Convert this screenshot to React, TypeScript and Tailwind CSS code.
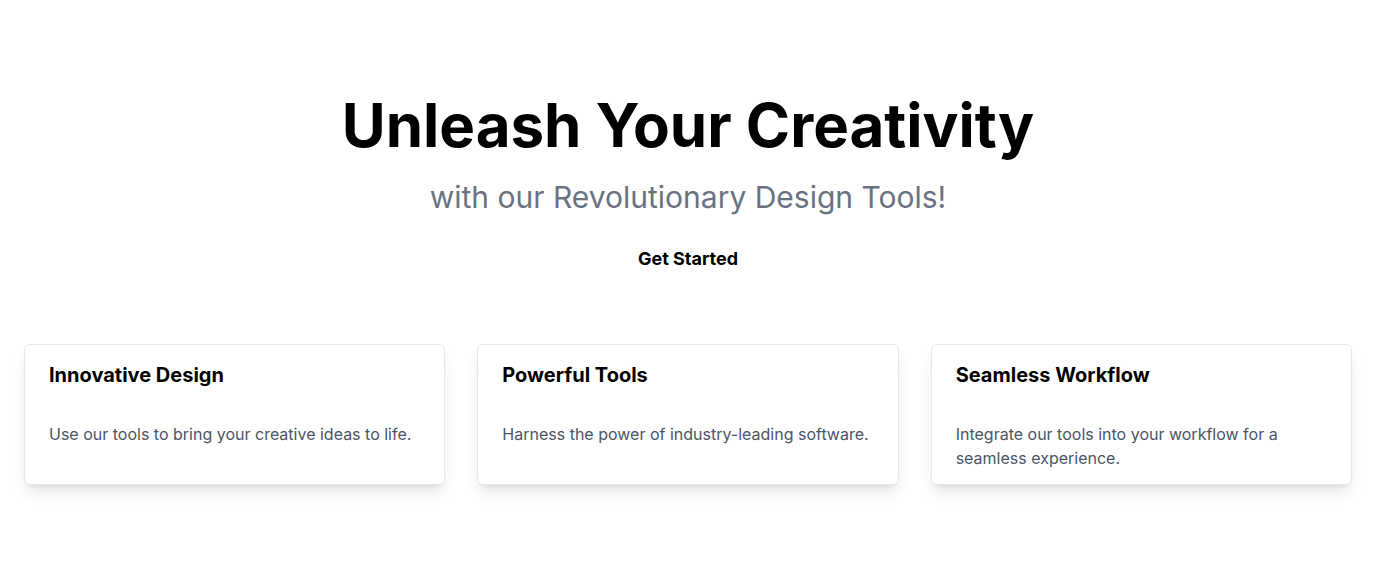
import React from "react";

const cards = [
  { title: "Innovative Design", desc: "Use our tools to bring your creative ideas to life." },
  { title: "Powerful Tools", desc: "Harness the power of industry-leading software." },
  { title: "Seamless Workflow", desc: "Integrate our tools into your workflow for a seamless experience." },
];

export default function App() {
  return (
    <div className="min-h-[582px] bg-white font-['Inter',sans-serif]">
      <section className="flex flex-col items-center pt-[89px] text-center">
        <h1 className="text-6xl font-bold leading-[72px] text-black">Unleash Your Creativity</h1>
        <p className="mt-[18px] text-3xl leading-9 text-gray-500">with our Revolutionary Design Tools!</p>
        <button className="mt-[30px] text-lg font-bold leading-7 text-black">Get Started</button>
      </section>
      <section className="grid grid-cols-3 gap-8 px-6 pt-[71px]">
        {cards.map((c) => (
          <div key={c.title} className="rounded-md border border-gray-200 bg-white px-6 pt-5 pb-[14px] shadow-lg">
            <h3 className="text-xl font-bold leading-none text-black">{c.title}</h3>
            <p className="mt-[37px] text-base leading-6 text-gray-600">{c.desc}</p>
          </div>
        ))}
      </section>
    </div>
  );
}
